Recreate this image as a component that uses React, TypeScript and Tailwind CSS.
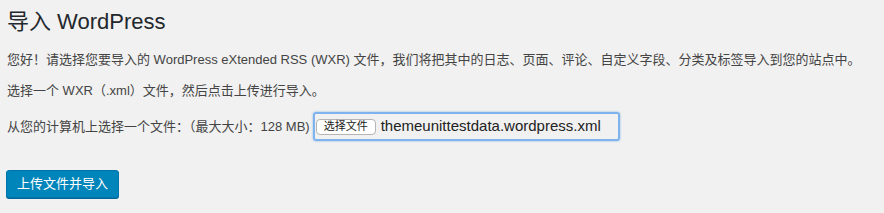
import React from "react";

export default function App() {
  const font = { fontFamily: '"Liberation Sans", "Noto Sans CJK SC", sans-serif' };
  return (
    <div className="w-[884px] h-[213px] bg-[#f1f1f1] text-[#23282d] overflow-hidden" style={font}>
      <div className="pl-[7px] pt-[7px]">
        <h1 className="text-[22px] leading-[29px] font-normal text-[#23282d] m-0">导入 WordPress</h1>
        <p className="mt-[14px] text-[13px] leading-[19px] text-[#444]">
          您好！请选择您要导入的 WordPress eXtended RSS (WXR) 文件，我们将把其中的日志、页面、评论、自定义字段、分类及标签导入到您的站点中。
        </p>
        <p className="mt-[12px] text-[13px] leading-[19px] text-[#444]">选择一个 WXR（.xml）文件，然后点击上传进行导入。</p>
        <div className="mt-[12px] flex items-center h-[29px] text-[13px] text-[#444]">
          <span>从您的计算机上选择一个文件：（最大大小：128 MB)</span>
          <div className="ml-[3px] flex items-center h-[29px] w-[307px] rounded-[3px] border-2 border-[#7fb3ee] shadow-[0_0_2px_rgba(91,157,217,0.8)] pl-[1px]">
            <span className="flex items-center justify-center h-[16px] w-[60px] rounded-[4px] border border-[#b4b4b4] bg-white text-[11px] text-[#222] leading-none">选择文件</span>
            <span className="ml-[5px] text-[15px] text-[#222]">themeunittestdata.wordpress.xml</span>
          </div>
        </div>
        <button className="-ml-[1px] mt-[29px] h-[28px] px-[10px] rounded-[3px] border border-[#0073aa] bg-[#0085ba] text-white text-[13px] leading-[26px] shadow-[0_1px_0_#006799]">上传文件并导入</button>
      </div>
    </div>
  );
}
